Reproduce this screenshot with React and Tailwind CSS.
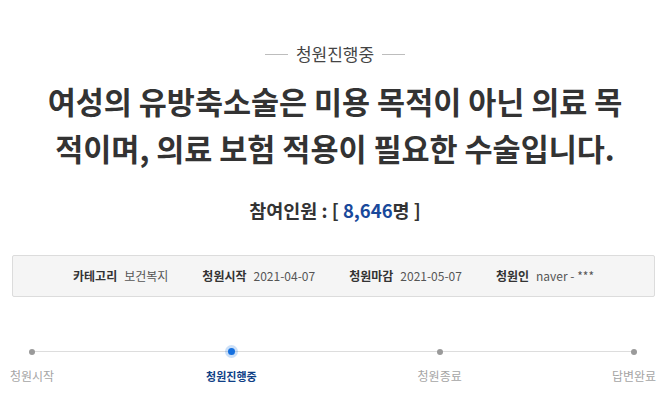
const steps = [
  { label: '청원시작', w: 'w-[40px]', active: false },
  { label: '청원진행중', w: 'w-[70px]', active: true },
  { label: '청원종료', w: 'w-[58px]', active: false },
  { label: '답변완료', w: 'w-[42px]', active: false },
];

const info = [
  { k: '카테고리', v: '보건복지' },
  { k: '청원시작', v: '2021-04-07' },
  { k: '청원마감', v: '2021-05-07' },
  { k: '청원인', v: 'naver - ***' },
];

export default function App() {
  return (
    <div
      className="w-[670px] h-[415px] bg-white overflow-hidden pt-[43px]"
      style={{ fontFamily: '"Noto Sans CJK KR", "Noto Sans", sans-serif' }}
    >
      {/* status */}
      <div className="flex items-center justify-center gap-[8px] h-[22px]">
        <span className="w-[23px] h-px bg-[#bdbdbd]" />
        <span className="text-[17px] leading-[22px] text-[#444]">청원진행중</span>
        <span className="w-[23px] h-px bg-[#bdbdbd]" />
      </div>

      {/* title */}
      <h1 className="mt-[13px] text-center text-[30.5px] leading-[47px] font-bold text-[#333]">
        여성의 유방축소술은 미용 목적이 아닌 의료 목
        <br />
        적이며, 의료 보험 적용이 필요한 수술입니다.
      </h1>

      {/* count */}
      <div className="mt-[26px] text-center text-[18.5px] leading-[24px] font-bold text-[#333]">
        참여인원 : [ <span className="text-[#19499b]">8,646</span>명 ]
      </div>

      {/* info box */}
      <div className="mt-[33px] ml-[12px] mr-[15px] h-[42px] border border-[#dcdcdc] rounded-[2px] bg-[#f5f5f5] flex items-center justify-center gap-[34px] text-[12px]">
        {info.map((it) => (
          <div key={it.k} className="flex items-center gap-[7px]">
            <span className="font-bold text-[#333]">{it.k}</span>
            <span className="text-[#555]">{it.v}</span>
          </div>
        ))}
      </div>

      {/* progress */}
      <div className="relative mt-[51px] ml-[12px] mr-[15px] flex justify-between">
        <div className="absolute left-[20px] right-[21px] top-[3px] h-px bg-[#dddddd]" />
        {steps.map((s) => (
          <div key={s.label} className={`relative flex flex-col items-center ${s.w}`}>
            {s.active ? (
              <span className="w-[7px] h-[7px] rounded-full bg-[#1570e0] shadow-[0_0_0_3px_rgba(21,112,224,0.22)]" />
            ) : (
              <span className="mt-[0.5px] w-[6px] h-[6px] rounded-full bg-[#9a9a9a]" />
            )}
            <span
              className={`mt-[13px] leading-[16px] whitespace-nowrap ${
                s.active ? 'text-[11px] font-bold text-[#0f3f86]' : 'text-[12px] text-[#a5a5a5]'
              }`}
            >
              {s.label}
            </span>
          </div>
        ))}
      </div>
    </div>
  );
}
